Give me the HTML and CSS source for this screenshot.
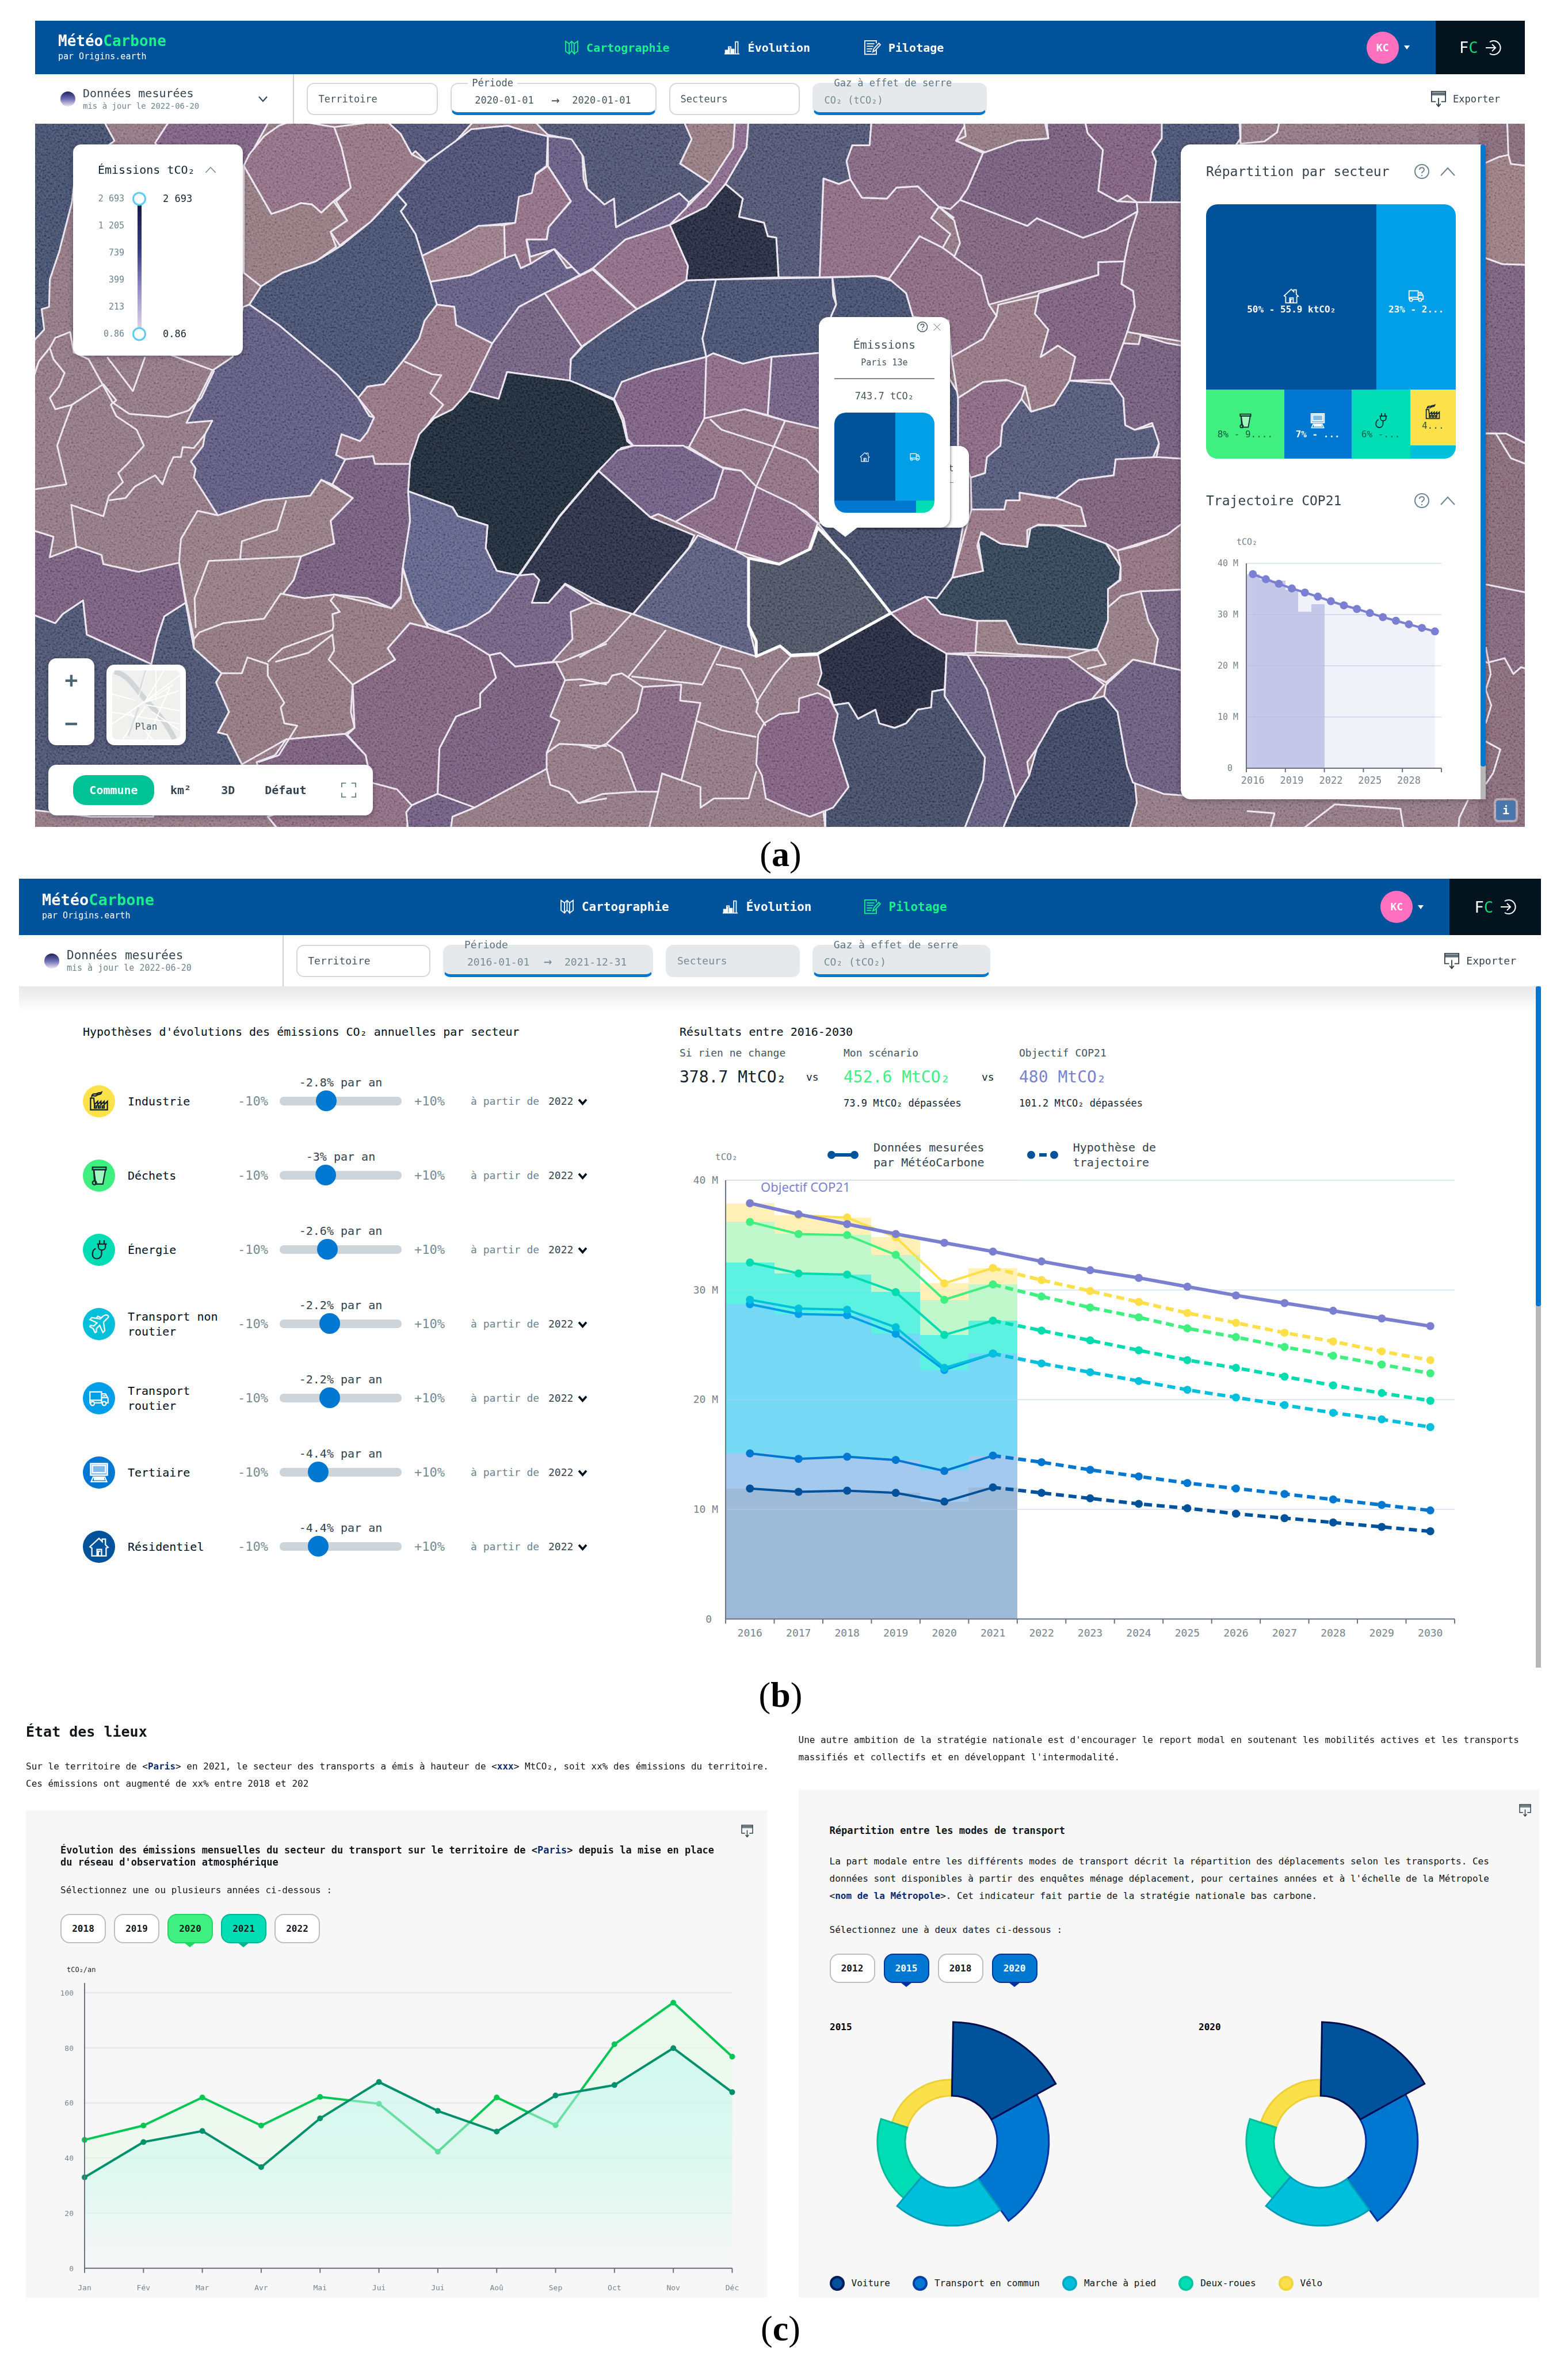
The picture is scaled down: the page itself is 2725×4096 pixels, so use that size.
FILE: index.html
```
<!DOCTYPE html>
<html lang="fr">
<head>
    <meta charset="UTF-8">
    <title>MétéoCarbone</title>
    <link rel="stylesheet" href="styles.css">
</head>
<body>

<svg class="sprite" aria-hidden="true">
    <symbol id="i-map" viewBox="0 0 28 32"><path d="M2 3l7 5v20l-7-5zM9 8l5-5 5 5M14 3v19l-5 6M14 22l5 6V8l7-5v20l-7 5"/></symbol>
    <symbol id="i-bars" viewBox="0 0 32 32"><path d="M1 28h30M3 28v-7h4v7M9 28V14h5v14M16 28v-9h4v9M23 28V4h5v24M5 22v6M11 16v12M18 20v8"/></symbol>
    <symbol id="i-edit" viewBox="0 0 34 32"><path d="M25 20v9H2V2h23v5M6 8h15M6 13h13M6 18h11M6 23h9M18 24l2-6L30 7l3 3-11 12z"/></symbol>
    <symbol id="i-export" viewBox="0 0 28 30"><path d="M9 20H1V1h26v19h-8M1 7h26M1 4h26M14 13v15M10 24l4 5 4-5"/></symbol>
    <symbol id="i-login" viewBox="0 0 28 28"><path d="M8 4a12 12 0 1 1 0 20M1 14h16M12 8l6 6-6 6"/></symbol>
    <symbol id="i-help" viewBox="0 0 28 28"><circle cx="14" cy="14" r="12"/><path d="M10 11c0-5 8-5 8 0 0 3-4 3-4 6M14 20v2"/></symbol>
    <symbol id="i-up" viewBox="0 0 28 18"><path d="M2 16L14 3l12 13"/></symbol>
    <symbol id="i-close" viewBox="0 0 18 18"><path d="M2 2l14 14M16 2L2 16"/></symbol>
    <symbol id="i-factory" viewBox="0 0 32 32"><path d="M3 29V11h5l1 10 5-5v5l5-5v5l5-5v5l5-5v13zM9 23h3v3H9zM15 23h3v3h-3zM21 23h3v3h-3zM5 8c1-6 5-2 8-4s6-1 7-2c-1 5-6 2-8 5-2 2-5-1-7 1z"/></symbol>
    <symbol id="i-bin" viewBox="0 0 32 32"><path d="M6 3h21v4H6z"/><path d="M8 7h18l-4 22H11z" fill="rgba(255,255,255,.5)"/><path d="M8 7l1 17"/><circle cx="9" cy="27" r="3"/></symbol>
    <symbol id="i-plug" viewBox="0 0 32 32"><path d="M17 1v6M24 1v6M13 7h15M15 7v4c0 7 11 7 11 0V7M20 16v6c0 10-14 10-14 1 0-5 2-8 5-9"/></symbol>
    <symbol id="i-plane" viewBox="0 0 32 32"><path d="M30 3c-2-2-6-1-8 1l-4 4L5 6 2 9l11 5-5 5-5-1-1 2 5 3 3 6 2-1v-5l5-5 5 11 3-3-2-13 4-4c2-2 5-4 3-6zM12 7l2-3 5 2"/></symbol>
    <symbol id="i-truck" viewBox="0 0 32 32"><path d="M3 23H2V6h18v17M20 9h6l4 7v7h-3M9 23h12M20 15h9M22 12h4M2 19h18"/><circle cx="6" cy="24" r="3"/><circle cx="24" cy="24" r="3"/></symbol>
    <symbol id="i-screen" viewBox="0 0 32 32"><path d="M3 2h26v18H3zM6 5h20v11H6z" fill="rgba(255,255,255,.5)"/><path d="M7 23h18l3 7H4zM8 25h16M8 27h17"/></symbol>
    <symbol id="i-house" viewBox="0 0 32 32"><path d="M2 16L16 3l5 5V4h5v9l4 4-3 1v12H5V18zM13 30V20h7v10M15 30v-7h3"/></symbol>
    <symbol id="i-full" viewBox="0 0 30 30"><path d="M2 10V2h8M20 2h8v8M28 20v8h-8M10 28H2v-8"/></symbol>
    <symbol id="i-down" viewBox="0 0 18 14"><path d="M2 3l7 8 7-8"/></symbol>
</svg>

<section class="app app--map">
    <header class="topbar">
        <div class="logo"><strong>Météo<em>Carbone</em></strong><span>par Origins.earth</span></div>
        <nav class="nav">
            <a href="#carte" class="active"><svg class="icon"><use href="#i-map"/></svg>Cartographie</a>
            <a href="#evolution"><svg class="icon"><use href="#i-bars"/></svg>Évolution</a>
            <a href="#pilotage"><svg class="icon"><use href="#i-edit"/></svg>Pilotage</a>
        </nav>
        <button class="account"><span>KC</span><i></i></button>
        <a class="fc" href="#fc">F<b>C</b><svg class="icon"><use href="#i-login"/></svg></a>
    </header>
    <div class="filters">
        <div class="source">
            <span class="dot"></span>
            <p>Données mesurées<small>mis à jour le 2022-06-20</small></p>
            <button class="source-open" aria-label="Choisir les données"><svg class="icon"><use href="#i-down"/></svg></button>
        </div>
        <div class="field field--s"><input type="text" value="Territoire" aria-label="Territoire"></div>
        <div class="field field--m on">
            <label for="a-from">Période</label>
            <input id="a-from" type="text" value="2020-01-01"><span class="arrow">→</span><input type="text" value="2020-01-01" aria-label="Fin de période">
        </div>
        <div class="field field--s"><input type="text" value="Secteurs" aria-label="Secteurs"></div>
        <div class="field field--l on off"><label for="a-gaz">Gaz à effet de serre</label><input id="a-gaz" type="text" value="CO₂ (tCO₂)" disabled></div>
        <button class="export"><svg class="icon"><use href="#i-export"/></svg>Exporter</button>
    </div>

    <div class="map" id="carte">
        <svg class="map-canvas" viewBox="0 0 2589 1222" preserveAspectRatio="xMidYMid slice">
            <defs>
                <filter id="grain" x="0" y="0" width="100%" height="100%">
                    <feTurbulence type="fractalNoise" baseFrequency=".3" numOctaves="4" seed="7"/>
                    <feColorMatrix values="2 0 0 0 -.42  2 0 0 0 -.42  2 0 0 0 -.42  0 0 0 0 1"/>
                </filter>
            </defs>
            <rect width="2589" height="1222" fill="#8a707b"/>

            <!-- ouest -->
            <g transform="matrix(.642 0 0 .791 -13 -6)">
                <polygon fill="#3d4866" points="10,0 205,0 235,45 130,110 120,180 85,290 60,350 58,410 38,415 45,460 10,490"/>
                <polygon fill="#76587a" points="385,0 655,0 590,95 585,110 400,100 345,50"/>
                <polygon fill="#8a677d" points="720,0 830,15 850,60 875,148 828,178 795,203 770,185 740,182 700,195 660,206 585,100 600,75 640,35 680,12"/>
                <polygon fill="#8d6d7a" points="830,15 970,0 1010,30 1040,75 1080,92 1000,160 930,222 845,275 820,245 865,220 835,178 875,148 850,60"/>
                <polygon fill="#8d727a" points="585,100 660,206 700,195 740,182 770,185 795,203 828,178 865,220 820,245 835,278 780,310 690,335 632,365 585,335"/>
                <polygon fill="#474a6b" points="970,0 1210,0 1160,45 1080,92 1050,68 1040,75 1010,30"/>
                <polygon fill="#44476b" points="1200,20 1260,15 1300,12 1340,22 1408,35 1405,100 1375,118 1380,135 1365,160 1335,170 1320,225 1230,232 1150,265 1068,298 1050,250 1010,200 1025,185 1000,162 1080,92 1160,45"/>
                <polygon fill="#8a677d" points="1408,100 1470,178 1410,235 1405,262 1350,262 1362,315 1335,325 1320,295 1292,303 1290,230 1320,225 1330,168 1365,160 1375,120"/>
                <polygon fill="#927580" points="1068,298 1150,265 1220,232 1290,230 1292,303 1200,340 1090,355"/>
                <polygon fill="#5b557c" points="1090,355 1200,340 1292,303 1320,295 1335,325 1362,315 1425,283 1460,325 1475,322 1495,340 1400,380 1330,410 1258,490 1215,480 1160,450 1155,410 1108,405"/>
                <polygon fill="#3f4867" points="600,405 632,365 690,335 780,310 850,275 930,222 1000,162 1025,185 1010,200 1050,250 1068,298 1090,355 1108,405 1075,440 1060,480 1015,530 965,580 920,585 895,610 840,560 760,505 680,450"/>
                <polygon fill="#565377" points="600,405 680,450 760,505 840,560 895,610 925,650 938,653 920,685 900,705 850,690 835,735 860,745 850,780 825,800 795,790 765,825 640,835 515,868 450,785 455,765 442,750 475,715 480,690 500,660 430,665 500,550 555,520 583,410"/>
                <polygon fill="#8d6c7b" points="1108,405 1155,410 1160,450 1258,490 1195,595 1150,640 1090,660 1060,700 1035,755 940,755 935,738 860,745 835,735 850,690 900,705 920,685 938,653 895,610 920,585 965,580 1020,525 1060,480 1075,440"/>
                <polygon fill="#6b5879" points="1400,380 1500,497 1470,525 1468,572 1298,553 1275,612 1195,595 1258,490 1330,410"/>
                <polygon fill="#85657f" points="1400,380 1529,328 1649,415 1500,497"/>
                <polygon fill="#1b2532" points="1298,553 1470,572 1493,580 1587,615 1610,660 1623,705 1638,715 1607,720 1545,770 1440,870 1330,1000 1270,990 1240,940 1245,890 1165,870 1150,850 1030,815 1035,750 1060,690 1100,655 1150,635 1195,595 1275,612"/>
                <polygon fill="#252a3f" points="1545,770 1685,872 1805,912 1789,940 1639,1085 1568,1067 1455,1018 1410,1060 1365,1060 1370,1020 1385,1010 1370,997 1330,1000 1440,870"/>
                <polygon fill="#5a5b82" points="1030,815 1150,850 1165,870 1245,890 1240,940 1270,990 1330,1000 1250,1080 1190,1110 1130,1125 1080,1105 1045,1060 1015,980 1035,880"/>
                <polygon fill="#6c5474" points="860,745 935,738 940,755 1035,755 1030,815 1035,880 1015,985 1015,1040 985,1072 920,1050 830,1042 750,1050 685,1040 720,1010 740,958 830,930 820,880 880,830 825,800"/>
                <polygon fill="#8d747c" points="460,858 515,868 640,835 700,830 765,825 795,790 880,830 820,880 830,930 740,958 720,1010 640,1095 530,1105 450,1140 425,1040 410,970 415,920"/>
                <polygon fill="#8a6f78" points="450,1140 465,1125 530,1105 640,1095 685,1040 750,1050 830,1042 985,1072 1010,1050 1015,985 1045,1060 1085,1115 1035,1105 975,1160 995,1185 880,1240 875,1300 885,1335 860,1348 700,1360 580,1415 550,1380 540,1350 515,1345 545,1300 510,1235 525,1215 450,1160"/>
                <polygon fill="#785a76" points="1085,1115 1170,1135 1230,1165 1250,1175 1268,1225 1225,1260 1225,1290 1160,1310 1115,1380 1110,1480 1040,1505 930,1455 915,1395 865,1350 885,1335 880,1240 995,1185 975,1160 1035,1105"/>
                <polygon fill="#6f5674" points="1250,1175 1280,1170 1320,1200 1430,1190 1455,1230 1415,1310 1440,1320 1405,1390 1405,1425 1210,1510 1150,1530 1110,1560 1040,1505 1110,1480 1115,1380 1160,1310 1225,1290 1225,1260 1268,1225"/>
                <polygon fill="#6a587a" points="1130,1125 1190,1110 1250,1080 1330,1000 1370,997 1385,1010 1365,1060 1410,1060 1455,1020 1530,1060 1470,1080 1475,1140 1420,1190 1320,1200 1280,1170 1250,1175 1170,1135"/>
                <polygon fill="#705676" points="10,900 70,915 60,960 135,937 200,955 205,975 300,992 410,972 428,1060 370,1090 350,1140 335,1195 160,1130 150,1055 95,1085 75,1105 10,1085"/>
                <polygon fill="#434b69" points="10,1085 75,1105 95,1085 150,1055 160,1130 335,1195 350,1140 370,1090 428,1060 450,1160 525,1215 510,1235 545,1300 515,1345 540,1350 580,1415 600,1450 350,1440 340,1530 170,1530 120,1525 10,1515"/>
                <polygon fill="#715674" points="700,1360 860,1348 915,1395 930,1455 650,1500 620,1410 670,1395"/>
                <polygon fill="#856479" points="930,1455 1000,1470 1040,1505 1025,1560 680,1560 650,1530"/>
                <polygon fill="#675578" points="1040,1505 1110,1480 1210,1510 1150,1530 1145,1560 1030,1560 1025,1520"/>
                <g class="lines">
                    <polyline points="10,580 30,530 60,500 70,525 100,555 85,585 60,610 75,635 120,625 95,680 80,715 105,800 10,812"/>
                    <polyline points="60,500 75,478 115,465 125,510 165,525 230,620 275,645 380,652 435,638 470,610 505,550"/>
                    <polyline points="120,625 205,580 240,615 225,625 240,650 295,680 315,715 270,755 245,775 258,795 220,825 205,870 118,845 132,940"/>
                    <polyline points="220,835 265,830 290,805 345,780 365,800 380,765 395,740 415,740 420,718 450,720 480,690"/>
                    <polyline points="455,1115 452,1050 490,968 740,958"/>
                    <polyline points="575,965 580,925 675,900 700,835"/>
                    <polyline points="650,1190 690,1160 825,1120 828,1112 825,1085 845,1080 820,1055 830,1045"/>
                    <polyline points="670,1190 760,1170 825,1130 830,1165 815,1185 880,1240"/>
                    <polyline points="525,1215 580,1215 595,1180 650,1195 650,1220 695,1280 685,1290 695,1325 730,1330 680,1395 625,1410"/>
                    <polyline points="215,520 285,595 318,520"/>
                    <polyline points="385,515 505,550"/>
                    <polyline points="1020,530 1095,558 1120,560 1090,600 1125,625 1090,660"/>
                    <polyline points="1530,1060 1568,1067"/>
                    <polyline points="1405,1390 1440,1370 1568,1375"/>
                    <polyline points="1405,1425 1415,1460 1465,1475 1490,1500 1568,1490"/>
                    <polyline points="1420,1190 1445,1190 1568,1150"/>
                    <polyline points="1455,1230 1500,1228 1568,1240"/>
                    <polyline class="thick" points="1545,770 1440,870 1330,1000"/>
                </g>
            </g>

            <!-- centre et est -->
            <g transform="matrix(.668 0 0 .791 946 -6)">
                <polygon fill="#5f547a" points="-82,35 -22,40 7,70 11,130 20,150 65,185 90,172 95,235 260,160 285,180 275,200 235,230 120,262 35,325 2,340 -65,283 -128,300 -137,262 -85,262 -80,235 -22,178 -82,100"/>
                <polygon fill="#464b69" points="-120,0 275,0 292,42 262,95 340,138 285,180 260,160 95,235 90,172 65,185 20,150 10,80 -20,42 -82,32"/>
                <polygon fill="#8e737b" points="270,0 405,0 400,60 340,138 262,95 292,42"/>
                <polygon fill="#826384" points="405,0 440,0 435,60 380,140 330,190 235,230 340,138 400,60"/>
                <polygon fill="#484d6b" points="440,0 760,0 755,55 710,55 695,90 705,130 675,140 635,128 625,345 518,345 512,258 490,255 480,225 415,212 425,172 380,140 435,60"/>
                <polygon fill="#212538" points="235,230 330,190 380,140 425,172 415,212 480,225 490,255 512,258 518,345 278,352 282,320"/>
                <polygon fill="#86657f" points="35,325 120,262 235,230 282,320 278,352 150,415"/>
                <polygon fill="#3f4867" points="9,497 60,465 150,415 215,385 278,352 355,350 320,480 330,520 190,550 110,575 90,612 0,580 -25,572 -22,525"/>
                <polygon fill="#3f4867" points="355,350 658,345 660,385 668,405 655,430 640,510 500,520 425,535 348,512 330,520 320,480"/>
                <polygon fill="#3d4766" points="658,345 770,342 820,355 850,380 868,432 985,600 985,780 620,800 640,510 655,430 668,405"/>
                <polygon fill="#75577a" points="110,575 190,550 330,520 330,650 285,718 140,715 125,700 115,655 90,612"/>
                <polygon fill="#83637e" points="330,520 348,512 425,535 500,520 490,648 430,635 325,655"/>
                <polygon fill="#6a587c" points="500,520 640,510 640,690 535,660 490,648"/>
                <polygon fill="#886a7c" points="285,718 325,655 430,635 535,660 640,680 640,900 590,860 460,805 420,770 370,762"/>
                <polygon fill="#68567b" points="50,770 100,725 140,715 270,715 375,765 350,830 250,882 205,865 185,872"/>
                <polygon fill="#80607d" points="375,765 420,770 460,805 560,845 620,885 595,945 520,975 405,945 250,882 350,830"/>
                <polygon fill="#535576" points="308,912 405,945 440,962 440,1110 460,1178 370,1155 140,1085 285,940"/>
                <polygon fill="#3b425f" points="620,885 1000,880 990,930 970,1005 930,1050 900,1047 810,1083"/>
                <polygon fill="#2c3b4e" points="970,1005 1050,990 1035,910 1060,910 1095,930 1165,937 1175,890 1240,890 1320,910 1370,930 1408,980 1405,1010 1375,1030 1375,1100 1345,1165 1250,1160 1140,1150 1110,1100 1035,1100 940,1085 900,1047 930,1050"/>
                <polygon fill="#8d6d7a" points="1020,855 1105,855 1110,835 1145,835 1145,818 1225,830 1245,820 1305,850 1318,892 1240,890 1195,888 1165,900 1165,937 1095,930 1045,905 1035,935 1050,990 970,1005 995,930"/>
                <polygon fill="#4b5070" points="1018,785 1055,775 1060,740 1095,715 1100,670 1150,612 1175,640 1235,625 1275,572 1395,580 1415,610 1420,670 1445,680 1500,670 1508,710 1490,745 1395,745 1390,780 1300,790 1240,830 1145,818 1145,835 1110,835 1105,855 1020,855"/>
                <polygon fill="#81607a" points="985,610 1050,575 1140,570 1160,585 1150,612 1100,670 1095,715 1060,740 1055,775 1018,785 985,720"/>
                <polygon fill="#8c6f7a" points="968,520 1050,480 1085,430 1090,405 1195,385 1185,425 1220,460 1200,520 1245,495 1290,520 1275,572 1235,625 1175,640 1160,585 1110,570 1050,575 985,610"/>
                <polygon fill="#85647c" points="635,128 675,140 705,130 735,170 800,172 825,148 880,145 935,190 915,215 965,250 945,280 885,255 805,348 770,342 625,345"/>
                <polygon fill="#826279" points="805,348 885,255 945,280 1045,342 1065,405 1085,430 1070,450 1050,480 968,520 960,440 868,432 850,380"/>
                <polygon fill="#785c75" points="935,190 990,175 1165,232 1190,215 1310,258 1370,240 1452,200 1430,260 1418,310 1350,312 1350,340 1065,405 1045,342 975,300 990,270 975,220"/>
                <polygon fill="#7c5e79" points="710,55 755,55 760,0 1010,0 980,45 1050,72 1010,150 990,175 965,195 935,190 880,145 825,148 800,172 735,170 705,130 695,90"/>
                <polygon fill="#8b717a" points="1000,0 1210,0 1220,40 1140,45 1060,72 980,45 1005,35"/>
                <polygon fill="#6f5674" points="1050,72 1140,45 1220,40 1215,0 1315,0 1322,28 1362,65 1350,155 1400,178 1450,180 1452,200 1370,240 1310,258 1190,215 1165,232 990,175 1010,150"/>
                <polygon fill="#775877" points="1315,0 1520,0 1515,40 1490,70 1500,90 1485,180 1450,180 1425,165 1400,178 1350,155 1362,65 1322,28"/>
                <polygon fill="#414a69" points="1515,0 1720,0 1720,40 1600,185 1545,182 1485,180 1500,90 1490,70 1515,40"/>
                <polygon fill="#7b5e75" points="1485,180 1600,180 1600,490 1560,485 1425,465 1445,410 1440,375 1410,360 1418,310 1430,260 1452,200 1450,180"/>
                <polygon fill="#735875" points="1195,380 1350,340 1350,312 1418,310 1410,360 1440,375 1445,410 1425,465 1415,490 1380,570 1275,572 1290,520 1245,495 1200,520 1220,460 1185,425"/>
                <polygon fill="#6b5575" points="1415,490 1455,492 1460,472 1530,490 1600,500 1600,745 1500,745 1508,710 1490,665 1445,680 1420,670 1415,610 1380,570"/>
                <polygon fill="#755874" points="1395,745 1500,740 1600,745 1600,870 1530,910 1400,945 1370,930 1240,890 1318,892 1305,850 1240,830 1300,790 1390,780"/>
                <polygon fill="#886b78" points="1400,945 1450,935 1530,910 1600,865 1600,1030 1460,1035 1410,1045 1375,1070 1375,1030 1408,1010 1408,980"/>
                <polygon fill="#695876" points="1460,1035 1600,1030 1600,1215 1495,1195 1505,1140 1480,1100"/>
                <polygon fill="#8d737b" points="1410,1045 1460,1035 1480,1100 1505,1140 1495,1195 1440,1185 1370,1235 1300,1205 1270,1180 1030,1168 1035,1100 1110,1100 1140,1150 1345,1165 1375,1100 1375,1070"/>
                <polygon fill="#85657d" points="810,1083 900,1047 940,1085 1035,1100 1030,1170 955,1172 870,1130"/>
                <polygon fill="#212438" points="620,1172 810,1083 870,1130 955,1172 950,1250 918,1255 915,1290 880,1295 850,1325 820,1335 780,1325 770,1295 725,1315 700,1280 660,1285 650,1255 620,1240 630,1215"/>
                <polygon fill="#5a5375" points="955,1172 1010,1175 1060,1250 1135,1490 1100,1560 1000,1560 1050,1450 1055,1400 950,1265"/>
                <polygon fill="#6e5675" points="1010,1175 1270,1180 1365,1240 1330,1275 1295,1280 1245,1300 1190,1380 1165,1410 1170,1440 1135,1490 1060,1250"/>
                <polygon fill="#3b435e" points="660,1285 700,1280 725,1315 770,1295 780,1325 820,1335 850,1325 880,1295 915,1290 918,1255 950,1250 950,1265 1055,1400 1050,1450 1000,1560 640,1560 640,1510 700,1465 660,1360 672,1305"/>
                <polygon fill="#353d59" points="1365,1265 1400,1300 1425,1420 1445,1455 1450,1500 1430,1560 1100,1560 1135,1490 1170,1440 1190,1380 1245,1300 1295,1280"/>
                <polygon fill="#625475" points="1370,1240 1440,1185 1495,1195 1600,1215 1600,1485 1520,1480 1440,1455 1425,1420 1400,1300 1365,1265"/>
                <polygon fill="#785877" points="480,1325 520,1305 570,1300 572,1270 620,1258 650,1270 672,1305 660,1360 700,1465 660,1510 600,1530 550,1515 485,1490 475,1440 460,1415 465,1350"/>
                <polygon fill="#7d5f79" points="165,1245 265,1240 262,1275 315,1280 265,1450 215,1435 205,1475 148,1475 110,1390 70,1370 150,1300"/>
                <g class="lines">
                    <polyline points="0,1180 70,1145 135,1085"/>
                    <polyline points="125,1225 225,1120"/>
                    <polyline points="0,1242 75,1235 85,1220 110,1215 165,1245"/>
                    <polyline points="135,1222 320,1240 370,1155"/>
                    <polyline points="355,1195 420,1205 450,1250 465,1280 460,1300 485,1330"/>
                    <polyline points="460,1280 510,1215 550,1178 620,1175"/>
                    <polyline points="460,1178 522,1155 550,1178"/>
                    <polyline points="70,1370 40,1380 0,1372"/>
                    <polyline points="148,1475 60,1480 0,1500"/>
                    <polyline points="305,1320 370,1340 460,1355"/>
                    <polyline points="215,1435 315,1465 315,1510 350,1490 440,1490 460,1430"/>
                    <polyline points="180,1560 205,1475"/>
                    <polyline points="340,657 370,680 510,718 590,745 640,790"/>
                    <polyline points="535,660 460,805 405,945"/>
                    <polyline points="1270,1180 1345,1160 1370,1195 1320,1205"/>
                    <polyline points="635,1520 640,1560"/>
                    <polyline points="915,215 935,190 975,215"/>
                </g>
                <polygon class="selected" fill="#454b5b" points="440,962 520,975 600,942 620,895 700,965 810,1083 720,1125 620,1172 550,1175 522,1155 460,1178 460,1145 440,1110"/>
            </g>

            <!-- bord droit, derrière le panneau -->
            <g transform="matrix(.437 0 0 .781 1953 19)">
                <rect x="1270" y="-30" width="200" height="1600" fill="#7f6271"/>
                <polygon fill="#92757a" points="1250,75 1350,50 1390,45 1400,65 1470,70 1470,290 1365,288 1250,265"/>
                <polygon fill="#725874" points="1250,265 1365,288 1470,290 1470,690 1380,665 1250,665"/>
                <polygon fill="#7b5e75" points="1250,995 1470,1020 1470,1190 1440,1185 1410,1200 1375,1165 1305,1175 1250,1150"/>
                <g class="lines">
                    <polyline points="320,-30 325,20 420,15 470,-5 480,-30"/>
                    <polyline points="1385,-30 1390,45"/>
                    <polyline points="1300,665 1340,665 1400,720 1470,735"/>
                    <polyline points="1300,1350 1358,1368 1330,1420 1300,1445"/>
                    <polyline points="1300,1140 1320,1200 1300,1235 1322,1270 1300,1310"/>
                    <polyline points="350,1505 460,1510 440,1550"/>
                    <polyline points="560,1550 700,1490 960,1500 975,1550"/>
                    <polyline points="1190,1550 1195,1520 1230,1480"/>
                </g>
            </g>
            <rect class="grain" width="2589" height="1222" filter="url(#grain)"/>
        </svg>

        <div class="panel scale">
            <button class="scale-title">Émissions tCO₂ <svg class="icon"><use href="#i-up"/></svg></button>
            <div class="scale-body">
                <ul><li>2 693</li><li>1 205</li><li>739</li><li>399</li><li>213</li><li>0.86</li></ul>
                <div class="scale-range">
                    <input type="range" min="0" max="100" value="100" aria-label="Maximum">
                    <input type="range" min="0" max="100" value="0" aria-label="Minimum">
                </div>
                <p><output>2 693</output><output>0.86</output></p>
            </div>
        </div>

        <div class="panel zoom"><button aria-label="Zoomer">+</button><button aria-label="Dézoomer">−</button></div>
        <button class="panel plan">
            <svg viewBox="0 0 118 116" preserveAspectRatio="none">
                <rect width="118" height="116" rx="8" fill="#f0f1ee"/>
                <path d="M4 2c25 6 34 26 52 45s38 40 52 68" stroke="#d0d6d8" stroke-width="9" fill="none"/>
                <path d="M0 90L60 50 118 8M60 0l-14 44M56 54l60-20M60 58l58 10M70 70l46 30M0 40l40 10M90 0L56 54l50-30M18 116l40-56M30 70l40 46M76 0v50M100 30L60 116M0 70l118 20" stroke="#fff" stroke-width="2" fill="none"/>
                <path d="M58 0L46 40M46 62L28 110" stroke="#d9dee0" stroke-width="3" fill="none"/>
            </svg>
            <span>Plan</span>
        </button>
        <div class="panel modes">
            <button class="active">Commune</button><button>km²</button><button>3D</button><button>Défaut</button>
            <button class="full" aria-label="Plein écran"><svg class="icon"><use href="#i-full"/></svg></button>
        </div>

        <div class="popup popup--back"><span>t</span></div>
        <div class="popup">
            <div class="popup-tools"><button aria-label="Aide"><svg class="icon"><use href="#i-help"/></svg></button><button aria-label="Fermer"><svg class="icon"><use href="#i-close"/></svg></button></div>
            <h3>Émissions</h3>
            <h4>Paris 13e</h4>
            <p>743.7 tCO₂</p>
            <div class="tree tree--mini">
                <div class="c-res"><svg class="icon"><use href="#i-house"/></svg></div>
                <div class="c-road"><svg class="icon"><use href="#i-truck"/></svg></div>
                <div class="c-ter"></div>
                <div class="c-ener"></div>
            </div>
        </div>

        <aside class="panel side">
            <div class="side-head"><h2>Répartition par secteur</h2><button aria-label="Aide"><svg class="icon"><use href="#i-help"/></svg></button><button aria-label="Replier"><svg class="icon"><use href="#i-up"/></svg></button></div>
            <div class="tree tree--main">
                <div class="tree-row">
                    <div class="c-res"><svg class="icon"><use href="#i-house"/></svg>50% - 55.9 ktCO₂</div>
                    <div class="c-road"><svg class="icon"><use href="#i-truck"/></svg>23% - 2...</div>
                </div>
                <div class="tree-row">
                    <div class="c-waste"><svg class="icon"><use href="#i-bin"/></svg>8% - 9....</div>
                    <div class="c-ter"><svg class="icon"><use href="#i-screen"/></svg>7% - ...</div>
                    <div class="c-ener"><svg class="icon"><use href="#i-plug"/></svg>6% -...</div>
                    <div class="tree-last"><div class="c-ind"><svg class="icon"><use href="#i-factory"/></svg>4...</div><div class="c-air"></div></div>
                </div>
            </div>
            <div class="side-head"><h2>Trajectoire COP21</h2><button aria-label="Aide"><svg class="icon"><use href="#i-help"/></svg></button><button aria-label="Replier"><svg class="icon"><use href="#i-up"/></svg></button></div>
            <svg id="cop21" class="chart" viewBox="0 0 434 490"></svg>
            <div class="scrollbar"><i></i></div>
        </aside>
        <button class="info">i</button>
    </div>
</section>
<p class="caption">(<b>a</b>)</p>

<section class="app app--pilot">
    <header class="topbar">
        <div class="logo"><strong>Météo<em>Carbone</em></strong><span>par Origins.earth</span></div>
        <nav class="nav">
            <a href="#carte"><svg class="icon"><use href="#i-map"/></svg>Cartographie</a>
            <a href="#evolution"><svg class="icon"><use href="#i-bars"/></svg>Évolution</a>
            <a href="#pilotage" class="active"><svg class="icon"><use href="#i-edit"/></svg>Pilotage</a>
        </nav>
        <button class="account"><span>KC</span><i></i></button>
        <a class="fc" href="#fc">F<b>C</b><svg class="icon"><use href="#i-login"/></svg></a>
    </header>
    <div class="filters">
        <div class="source">
            <span class="dot"></span>
            <p>Données mesurées<small>mis à jour le 2022-06-20</small></p>
        </div>
        <div class="field field--s"><input type="text" value="Territoire" aria-label="Territoire"></div>
        <div class="field field--m on off">
            <label for="b-from">Période</label>
            <input id="b-from" type="text" value="2016-01-01" disabled><span class="arrow">→</span><input type="text" value="2021-12-31" aria-label="Fin de période" disabled>
        </div>
        <div class="field field--s off"><input type="text" value="Secteurs" aria-label="Secteurs" disabled></div>
        <div class="field field--l on off"><label for="b-gaz">Gaz à effet de serre</label><input id="b-gaz" type="text" value="CO₂ (tCO₂)" disabled></div>
        <button class="export"><svg class="icon"><use href="#i-export"/></svg>Exporter</button>
    </div>

    <div class="pilot" id="pilotage">
        <div class="hypotheses">
            <h2>Hypothèses d'évolutions des émissions CO₂ annuelles par secteur</h2>
            <div class="row">
                <span class="badge c-ind"><svg class="icon"><use href="#i-factory"/></svg></span><label for="r1">Industrie</label>
                <span class="min">-10%</span><div class="rate"><output>-2.8% par an</output><input id="r1" type="range" min="-10" max="10" step="0.1" value="-2.8"></div><span class="max">+10%</span>
                <label class="since" for="y1">à partir de</label><span class="year"><select id="y1"><option>2022</option></select><svg class="icon"><use href="#i-down"/></svg></span>
            </div>
            <div class="row">
                <span class="badge c-waste"><svg class="icon"><use href="#i-bin"/></svg></span><label for="r2">Déchets</label>
                <span class="min">-10%</span><div class="rate"><output>-3% par an</output><input id="r2" type="range" min="-10" max="10" step="0.1" value="-3"></div><span class="max">+10%</span>
                <label class="since" for="y2">à partir de</label><span class="year"><select id="y2"><option>2022</option></select><svg class="icon"><use href="#i-down"/></svg></span>
            </div>
            <div class="row">
                <span class="badge c-ener"><svg class="icon"><use href="#i-plug"/></svg></span><label for="r3">Énergie</label>
                <span class="min">-10%</span><div class="rate"><output>-2.6% par an</output><input id="r3" type="range" min="-10" max="10" step="0.1" value="-2.6"></div><span class="max">+10%</span>
                <label class="since" for="y3">à partir de</label><span class="year"><select id="y3"><option>2022</option></select><svg class="icon"><use href="#i-down"/></svg></span>
            </div>
            <div class="row">
                <span class="badge c-air"><svg class="icon"><use href="#i-plane"/></svg></span><label for="r4">Transport non routier</label>
                <span class="min">-10%</span><div class="rate"><output>-2.2% par an</output><input id="r4" type="range" min="-10" max="10" step="0.1" value="-2.2"></div><span class="max">+10%</span>
                <label class="since" for="y4">à partir de</label><span class="year"><select id="y4"><option>2022</option></select><svg class="icon"><use href="#i-down"/></svg></span>
            </div>
            <div class="row">
                <span class="badge c-road"><svg class="icon"><use href="#i-truck"/></svg></span><label for="r5">Transport routier</label>
                <span class="min">-10%</span><div class="rate"><output>-2.2% par an</output><input id="r5" type="range" min="-10" max="10" step="0.1" value="-2.2"></div><span class="max">+10%</span>
                <label class="since" for="y5">à partir de</label><span class="year"><select id="y5"><option>2022</option></select><svg class="icon"><use href="#i-down"/></svg></span>
            </div>
            <div class="row">
                <span class="badge c-ter"><svg class="icon"><use href="#i-screen"/></svg></span><label for="r6">Tertiaire</label>
                <span class="min">-10%</span><div class="rate"><output>-4.4% par an</output><input id="r6" type="range" min="-10" max="10" step="0.1" value="-4.4"></div><span class="max">+10%</span>
                <label class="since" for="y6">à partir de</label><span class="year"><select id="y6"><option>2022</option></select><svg class="icon"><use href="#i-down"/></svg></span>
            </div>
            <div class="row">
                <span class="badge c-res"><svg class="icon"><use href="#i-house"/></svg></span><label for="r7">Résidentiel</label>
                <span class="min">-10%</span><div class="rate"><output>-4.4% par an</output><input id="r7" type="range" min="-10" max="10" step="0.1" value="-4.4"></div><span class="max">+10%</span>
                <label class="since" for="y7">à partir de</label><span class="year"><select id="y7"><option>2022</option></select><svg class="icon"><use href="#i-down"/></svg></span>
            </div>
        </div>

        <div class="results">
            <h2>Résultats entre 2016-2030</h2>
            <div class="stats">
                <div><span>Si rien ne change</span><strong>378.7 MtCO₂</strong></div>
                <i>vs</i>
                <div class="mine"><span>Mon scénario</span><strong>452.6 MtCO₂</strong><small>73.9 MtCO₂ dépassées</small></div>
                <i>vs</i>
                <div class="goal"><span>Objectif COP21</span><strong>480 MtCO₂</strong><small>101.2 MtCO₂ dépassées</small></div>
            </div>
            <div class="key">
                <span class="unit">tCO₂</span>
                <svg viewBox="0 0 54 14"><path d="M7 7h40"/><circle cx="7" cy="7" r="7"/><circle cx="47" cy="7" r="7"/></svg>
                <p>Données mesurées<br>par MétéoCarbone</p>
                <svg viewBox="0 0 54 14"><path d="M21 7h13"/><circle cx="7" cy="7" r="7"/><circle cx="47" cy="7" r="7"/></svg>
                <p>Hypothèse de<br>trajectoire</p>
            </div>
            <svg id="scenario" class="chart" viewBox="0 0 1350 830"></svg>
        </div>
        <div class="scrollbar"><i></i></div>
    </div>
</section>
<p class="caption">(<b>b</b>)</p>

<section class="report">
    <div class="col col--left">
        <h1>État des lieux</h1>
        <p class="lead">Sur le territoire de &lt;<b>Paris</b>&gt; en 2021, le secteur des transports a émis à hauteur de &lt;<b>xxx</b>&gt; MtCO₂, soit xx% des émissions du territoire.<br>Ces émissions ont augmenté de xx% entre 2018 et 202</p>
        <article class="card">
            <button class="card-export" aria-label="Exporter"><svg class="icon"><use href="#i-export"/></svg></button>
            <h2>Évolution des émissions mensuelles du secteur du transport sur le territoire de &lt;<b>Paris</b>&gt; depuis la mise en place<br>du réseau d'observation atmosphérique</h2>
            <p class="pick">Sélectionnez une ou plusieurs années ci-dessous :</p>
            <div class="chips"><button>2018</button><button>2019</button><button class="on-green">2020</button><button class="on-teal">2021</button><button>2022</button></div>
            <svg id="monthly" class="chart" viewBox="0 0 1168 587"></svg>
        </article>
    </div>
    <div class="col col--right">
        <p class="lead">Une autre ambition de la stratégie nationale est d'encourager le report modal en soutenant les mobilités actives et les transports<br>massifiés et collectifs et en développant l'intermodalité.</p>
        <article class="card">
            <button class="card-export" aria-label="Exporter"><svg class="icon"><use href="#i-export"/></svg></button>
            <h2>Répartition entre les modes de transport</h2>
            <p class="lead">La part modale entre les différents modes de transport décrit la répartition des déplacements selon les transports. Ces<br>données sont disponibles à partir des enquêtes ménage déplacement, pour certaines années et à l'échelle de la Métropole<br>&lt;<b>nom de la Métropole</b>&gt;. Cet indicateur fait partie de la stratégie nationale bas carbone.</p>
            <p class="pick">Sélectionnez une à deux dates ci-dessous :</p>
            <div class="chips"><button>2012</button><button class="on-blue">2015</button><button>2018</button><button class="on-blue">2020</button></div>
            <div class="roses">
                <svg class="rose" viewBox="0 0 592 375" data-year="2015"></svg>
                <svg class="rose" viewBox="0 0 592 375" data-year="2020"></svg>
            </div>
            <ul class="modes-key">
                <li><i class="m-car"></i>Voiture</li><li><i class="m-bus"></i>Transport en commun</li><li><i class="m-walk"></i>Marche à pied</li><li><i class="m-two"></i>Deux-roues</li><li><i class="m-bike"></i>Vélo</li>
            </ul>
        </article>
    </div>
</section>
<p class="caption caption--last">(<b>c</b>)</p>

<script src="charts.js"></script>
</body>
</html>
```
FILE: charts.js
```
var NS = "http://www.w3.org/2000/svg";

function add(parent, name, attrs, text) {
    var el = document.createElementNS(NS, name);
    for (var k in attrs) {
        el.setAttribute(k, attrs[k]);
    }
    if (text !== undefined) {
        el.textContent = text;
    }
    parent.appendChild(el);
    return el;
}

function points(list) {
    return list.map(function (p) { return p[0].toFixed(1) + "," + p[1].toFixed(1); }).join(" ");
}

// objectif COP21, en MtCO2
var goal = [37.9, 36.9, 36, 35.1, 34.3, 33.5, 32.6, 31.8, 31.1, 30.3, 29.5, 28.8, 28.1, 27.4, 26.7];

// cumuls par secteur, du haut vers le bas
var sectors = [
    {color: "#fddf4a", fill: "#fff0b8", v: [37.9, 36.8, 36.6, 34.8, 30.6, 32, 30.9, 29.9, 28.9, 27.9, 27, 26.1, 25.3, 24.4, 23.6]},
    {color: "#3fef7f", fill: "#c0f8cc", v: [36.2, 35.1, 35, 33.2, 29.1, 30.5, 29.4, 28.4, 27.5, 26.5, 25.7, 24.8, 24, 23.2, 22.4]},
    {color: "#00dcb0", fill: "#5cf2e1", v: [32.5, 31.5, 31.4, 29.8, 25.9, 27.2, 26.3, 25.4, 24.5, 23.6, 22.9, 22.1, 21.3, 20.6, 19.9]},
    {color: "#009fe8", fill: "#75d9f5", v: [28.7, 27.8, 27.7, 26, 22.7, 24.2]},
    {color: "#00c0dc", fill: null, v: [29.1, 28.3, 28.2, 26.6, 22.9, 24.2, 23.3, 22.5, 21.7, 20.9, 20.2, 19.5, 18.8, 18.2, 17.5]},
    {color: "#0078d2", fill: "#a3c9ee", v: [15.1, 14.6, 14.8, 14.5, 13.5, 14.9, 14.3, 13.6, 13, 12.4, 11.9, 11.4, 10.9, 10.4, 9.9]},
    {color: "#00529b", fill: "#9dbad9", v: [11.9, 11.6, 11.7, 11.5, 10.7, 12, 11.5, 11, 10.5, 10.1, 9.6, 9.2, 8.8, 8.4, 8]}
];

function drawCop21() {
    var svg = document.getElementById("cop21");
    var x0 = 70, x1 = 409, y0 = 450, y1 = 94, step = (x1 - x0) / 15;
    var y = function (v) { return y0 - v * (y0 - y1) / 40; };
    var line = goal.map(function (v, i) { return [x0 + step * (i + 0.5), y(v)]; });
    var i;
    for (i = 0; i <= 4; i++) {
        add(svg, "line", {x1: x0, x2: x1, y1: y(i * 10), y2: y(i * 10), "class": "grid"});
        add(svg, "text", {x: i ? 56 : 46, y: y(i * 10) + 5, "class": "t15 end"}, i ? i * 10 + " M" : "0");
    }
    add(svg, "text", {x: 53, y: 62, "class": "t15"}, "tCO₂");
    add(svg, "polygon", {points: points([[x0 + step / 2, y0]].concat(line, [[x1 - step / 2, y0]])), fill: "#7b7fd1", opacity: 0.11});
    for (i = 0; i < 6; i++) {
        add(svg, "rect", {x: x0 + i * step, y: y(sectors[0].v[i]), width: step, height: y0 - y(sectors[0].v[i]), fill: "#b5b8e2", opacity: 0.75, "shape-rendering": "crispEdges"});
    }
    add(svg, "polyline", {points: points(line), fill: "none", stroke: "#7b7fd1", "stroke-width": 4});
    line.forEach(function (p) { add(svg, "circle", {cx: p[0], cy: p[1], r: 7, fill: "#7b7fd1"}); });
    add(svg, "path", {d: "M" + x0 + " " + y1 + "V" + y0 + "H" + x1, "class": "axis"});
    for (i = 0; i <= 5; i++) {
        add(svg, "line", {x1: x0 + i * step * 3, x2: x0 + i * step * 3, y1: y0, y2: y0 + 7, "class": "axis"});
        if (i < 5) {
            add(svg, "text", {x: x0 + step * (i * 3 + 0.5), y: 477, "class": "t17 mid"}, 2016 + i * 3);
        }
    }
}

function drawScenario() {
    var svg = document.getElementById("scenario");
    var x0 = 80, x1 = 1346, y0 = 780, y1 = 18, step = (x1 - x0) / 15;
    var y = function (v) { return y0 - v * (y0 - y1) / 40; };
    var x = function (i) { return x0 + step * (i + 0.5); };
    var i;
    sectors.forEach(function (s) {
        if (!s.fill) { return; }
        for (var j = 0; j < 6; j++) {
            add(svg, "rect", {x: x0 + j * step, y: y(s.v[j]), width: step, height: y0 - y(s.v[j]), fill: s.fill, "shape-rendering": "crispEdges"});
        }
    });
    for (i = 0; i <= 4; i++) {
        add(svg, "line", {x1: i < 4 ? x0 + step * 6 : x0, x2: x1, y1: y(i * 10), y2: y(i * 10), "class": "grid"});
        add(svg, "line", {x1: x0, x2: x0 + step * 6, y1: y(i * 10), y2: y(i * 10), "class": "grid grid--soft"});
        add(svg, "text", {x: i ? 67 : 56, y: y(i * 10) + 6, "class": "t18 end"}, i ? i * 10 + " M" : "0");
    }
    sectors.forEach(function (s) {
        var pts = s.v.map(function (v, j) { return [x(j), y(v)]; });
        add(svg, "polyline", {points: points(pts.slice(0, 6)), fill: "none", stroke: s.color, "stroke-width": 4});
        add(svg, "polyline", {points: points(pts.slice(5)), fill: "none", stroke: s.color, "stroke-width": 6, "stroke-dasharray": "14 8"});
        pts.forEach(function (p) { add(svg, "circle", {cx: p[0], cy: p[1], r: 7, fill: s.color}); });
    });
    var line = goal.map(function (v, j) { return [x(j), y(v)]; });
    add(svg, "polyline", {points: points(line), fill: "none", stroke: "#7b7fd1", "stroke-width": 6});
    line.forEach(function (p) { add(svg, "circle", {cx: p[0], cy: p[1], r: 7, fill: "#7b7fd1"}); });
    add(svg, "text", {x: 141, y: 38, "class": "goal-label"}, "Objectif COP21");
    add(svg, "path", {d: "M" + x0 + " " + y1 + "V" + y0 + "H" + x1, "class": "axis"});
    for (i = 0; i <= 15; i++) {
        add(svg, "line", {x1: x0 + i * step, x2: x0 + i * step, y1: y0, y2: y0 + 8, "class": "axis"});
        if (i < 15) {
            add(svg, "text", {x: x(i), y: 810, "class": "t18 mid"}, 2016 + i);
        }
    }
}

function drawMonthly() {
    var svg = document.getElementById("monthly");
    var x0 = 42, x1 = 1168, y0 = 535, y1 = 56, step = (x1 - x0) / 11;
    var months = ["Jan", "Fév", "Mar", "Avr", "Mai", "Jui", "Jui", "Aoû", "Sep", "Oct", "Nov", "Déc"];
    var series = [
        {color: "#06c755", id: "g2020", top: "#e4fbe6", a: 0.7, v: [46.6, 51.8, 62, 51.8, 62.2, 59.7, 42.3, 62, 51.9, 81.3, 96.4, 76.8]},
        {color: "#00906c", id: "g2021", top: "#c4f7ee", a: 0.65, v: [33, 45.8, 49.8, 36.7, 54.4, 67.6, 57.1, 49.6, 62.7, 66.5, 79.9, 63.9]}
    ];
    var y = function (v) { return y0 - v * (y0 - y1) / 100; };
    var i;
    for (i = 0; i <= 5; i++) {
        add(svg, "line", {x1: x0, x2: x1, y1: y(i * 20), y2: y(i * 20), "class": "grid grid--grey"});
        add(svg, "text", {x: 23, y: y(i * 20) + 5, "class": "t13 end"}, i * 20);
    }
    series.forEach(function (s) {
        var pts = s.v.map(function (v, j) { return [x0 + j * step, y(v)]; });
        var grad = add(svg, "linearGradient", {id: s.id, x1: 0, x2: 0, y1: 0, y2: 1});
        add(grad, "stop", {offset: 0, "stop-color": s.top, "stop-opacity": s.a});
        add(grad, "stop", {offset: 0.6, "stop-color": s.top, "stop-opacity": s.a * 0.6});
        add(grad, "stop", {offset: 1, "stop-color": "#f7f7f7", "stop-opacity": 0.3});
        add(svg, "polygon", {points: points([[x0, y0]].concat(pts, [[x1, y0]])), fill: "url(#" + s.id + ")"});
        add(svg, "polyline", {points: points(pts), fill: "none", stroke: s.color, "stroke-width": 4});
        pts.forEach(function (p) { add(svg, "circle", {cx: p[0], cy: p[1], r: 5, fill: s.color}); });
    });
    add(svg, "path", {d: "M" + x0 + " 39V" + y0 + "H" + x1, "class": "axis"});
    months.forEach(function (m, j) {
        add(svg, "line", {x1: x0 + j * step, x2: x0 + j * step, y1: y0, y2: y0 + 8, "class": "axis"});
        add(svg, "text", {x: x0 + j * step, y: 573, "class": "t13 mid"}, m);
    });
    add(svg, "text", {x: 11, y: 20, "class": "t12 dark"}, "tCO₂/an");
}

function drawRose(svg) {
    var cx = 211, cy = 211, inner = 80;
    var slices = [
        [288, 360, 108, "#fae04b", "#ecd034"],
        [220, 288, 128, "#00dcb4", "#00bd97"],
        [61, 144, 170, "#0078d2", "#00329b"],
        [144, 220, 146, "#00c0dc", "#009db8"],
        [1, 61, 208, "#00529b", "#000f50"]
    ];
    var at = function (r, deg) {
        var a = deg * Math.PI / 180;
        return (cx + r * Math.sin(a)).toFixed(1) + " " + (cy - r * Math.cos(a)).toFixed(1);
    };
    slices.forEach(function (s) {
        add(svg, "path", {
            d: "M" + at(inner, s[0]) + "L" + at(s[2], s[0]) + "A" + s[2] + " " + s[2] + " 0 0 1 " + at(s[2], s[1]) +
                "L" + at(inner, s[1]) + "A" + inner + " " + inner + " 0 0 0 " + at(inner, s[0]) + "Z",
            fill: s[3], stroke: s[4], "stroke-width": 3
        });
    });
    add(svg, "text", {x: 0, y: 17, "class": "rose-year"}, svg.getAttribute("data-year"));
}

drawCop21();
drawScenario();
drawMonthly();
Array.prototype.forEach.call(document.querySelectorAll(".rose"), drawRose);
```
FILE: styles.css
```
* {
    box-sizing: border-box;
}

body {
    margin: 0;
    padding-top: 36px;
    background: #fff;
    color: #10242f;
    font-family: "DejaVu Sans Mono", monospace;
    font-size: 20px;
}

h1, h2, h3, h4, p, ul {
    margin: 0;
    padding: 0;
    font-weight: normal;
}

ul {
    list-style: none;
}

a {
    color: inherit;
    text-decoration: none;
}

button, input, select {
    padding: 0;
    border: 0;
    background: none;
    color: inherit;
    font: inherit;
}

.sprite {
    position: absolute;
    width: 0;
    height: 0;
}

.icon {
    display: block;
    flex: none;
    width: 28px;
    height: 28px;
    fill: none;
    stroke: currentColor;
    stroke-width: 2;
}

/* sector colours */
.c-res { background: #00529b; color: #fff; }
.c-road { background: #009fe8; color: #fff; }
.c-ter { background: #0078d2; color: #fff; }
.c-waste { background: #3fef7f; color: #10242f; }
.c-ener { background: #00dcb4; color: #10242f; }
.c-ind { background: #fde14a; color: #10242f; }
.c-air { background: #00c0dc; color: #fff; }

.app--map {
    margin: 0 75px 0 61px;
}

.app--pilot {
    margin: 0 47px 0 33px;
}

/* top bar */
.topbar {
    display: flex;
    align-items: center;
    height: 93px;
    background: #00529b;
    color: #fff;
}

.app--pilot .topbar {
    height: 98px;
}

.logo {
    flex: 0 0 35.5%;
    padding-left: 40px;
}

.logo strong {
    display: block;
    font-size: 26px;
    line-height: 30px;
}

.app--pilot .logo strong {
    font-size: 27px;
}

.logo em {
    color: #17f28b;
    font-style: normal;
}

.logo span {
    display: block;
    font-size: 15px;
    line-height: 24px;
}

.nav {
    display: flex;
    gap: 92px;
    font-weight: bold;
}

.app--pilot .nav {
    gap: 90px;
    font-size: 21px;
}

.nav a {
    display: flex;
    align-items: center;
    gap: 12px;
}

.nav .icon {
    width: 32px;
}

.nav a:first-child .icon {
    width: 27px;
}

.nav .active {
    color: #17f28b;
}

.account {
    display: flex;
    align-items: center;
    gap: 9px;
    margin: 0 45px 0 auto;
    color: #fff;
}

.account span {
    width: 56px;
    border-radius: 50%;
    background: #ff70bf;
    font-size: 18px;
    font-weight: bold;
    line-height: 56px;
}

.account i {
    border: 5px solid transparent;
    border-top: 7px solid #fff;
    border-bottom: 0;
}

.fc {
    display: flex;
    align-items: center;
    align-self: stretch;
    justify-content: center;
    width: 6%;
    background: #04141f;
    font-size: 27px;
}

.fc b {
    margin-right: 12px;
    color: #17d774;
    font-weight: normal;
}

/* filters */
.filters {
    display: flex;
    align-items: center;
    gap: 22px;
    height: 86px;
    font-size: 17px;
}

.app--pilot .filters {
    height: 89px;
    font-size: 18px;
}

.source {
    display: flex;
    align-items: center;
    gap: 13px;
    width: 17.4%;
    height: 100%;
    padding-left: 44px;
    border-right: 2px solid #cdd3d8;
    color: #33434d;
    font-size: 20px;
    line-height: 24px;
}

.source small {
    display: block;
    color: #6d8490;
    font-size: 14px;
    line-height: 20px;
}

.app--pilot .source {
    font-size: 21px;
}

.app--pilot .source small {
    font-size: 15px;
}

.dot {
    width: 26px;
    height: 26px;
    border-radius: 50%;
    background: linear-gradient(#1f2358, #6a6db4 50%, #f1e4f2);
}

.source-open {
    margin: 0 42px 0 auto;
}

.source-open .icon {
    width: 20px;
    height: 14px;
}

.field {
    position: relative;
    display: flex;
    align-items: center;
    height: 56px;
    padding: 0 18px;
    border: 2px solid #d3d9de;
    border-radius: 13px;
    color: #44555f;
}

.field--s { width: 8.8%; }
.field--m { width: 13.8%; padding-left: 40px; }
.field--l { width: 11.7%; }

.field input {
    width: 100%;
    min-width: 0;
}

.field--m input {
    width: 112px;
}

.field label {
    position: absolute;
    top: -14px;
    left: 28px;
    padding: 0 7px;
    line-height: 24px;
}

.on {
    border-bottom: 5px solid #0078d2;
}

.on input, .on .arrow {
    padding-top: 6px;
}

.on label {
    background: #fff;
}

.off {
    border-color: #e5e9ec;
    background: #e5e9ec;
    color: #768b95;
}

.on.off {
    border-bottom-color: #0078d2;
}

.off label {
    background: none;
    color: #5d7480;
}

.arrow {
    width: 56px;
    margin-right: 1px;
    text-align: center;
    font-size: 24px;
    line-height: 20px;
}

.export {
    display: flex;
    align-items: center;
    gap: 11px;
    margin: 0 43px 0 auto;
    color: #33434d;
}

/* map */
.map {
    position: relative;
    overflow: hidden;
    aspect-ratio: 2589 / 1222;
}

.map-canvas {
    display: block;
    width: 100%;
    height: 100%;
}

.map-canvas polygon, .lines polyline {
    stroke: #eae4ee;
    stroke-width: 3;
    stroke-linejoin: round;
    vector-effect: non-scaling-stroke;
}

.lines polyline {
    fill: none;
}

.lines .thick {
    stroke-width: 4;
}

.map-canvas .selected {
    stroke: #fff;
    stroke-width: 5;
}

.grain {
    mix-blend-mode: soft-light;
    opacity: .45;
}

.panel {
    position: absolute;
    border-radius: 14px;
    background: #fff;
    box-shadow: 0 2px 10px rgba(20, 20, 50, .35);
}

.scale {
    top: 36px;
    left: 66px;
    width: 295px;
    height: 367px;
    padding: 29px 40px 0 43px;
}

.scale-title {
    display: flex;
    align-items: center;
    gap: 17px;
    line-height: 30px;
    white-space: nowrap;
}

.scale-title .icon {
    width: 20px;
    height: 14px;
    color: #6d8490;
}

.scale-body {
    display: flex;
    height: 259px;
    margin-top: 23px;
}

.scale-body ul, .scale-body p {
    display: flex;
    flex-direction: column;
    justify-content: space-between;
}

.scale-body ul {
    width: 46px;
    color: #6d8490;
    font-size: 15px;
    line-height: 24px;
    text-align: right;
}

.scale-body p {
    font-size: 17px;
    line-height: 24px;
}

.scale-range {
    position: relative;
    width: 24px;
    margin: 0 29px 0 14px;
    background: linear-gradient(#10143f, #3a3f86 40%, #8f88c6 65%, #eadcf0) center / 7px 236px no-repeat;
}

.scale-range input {
    position: absolute;
    top: 50%;
    left: 50%;
    width: 259px;
    height: 24px;
    margin: 0;
    transform: translate(-50%, -50%) rotate(-90deg);
    -webkit-appearance: none;
    pointer-events: none;
}

.scale-range input::-webkit-slider-thumb {
    width: 24px;
    height: 24px;
    border: 3px solid #5cccf5;
    border-radius: 50%;
    background: #fff;
    -webkit-appearance: none;
    pointer-events: auto;
}

.zoom {
    bottom: 142px;
    left: 23px;
    display: flex;
    flex-direction: column;
    width: 80px;
    height: 151px;
    color: #4c6573;
    font-size: 38px;
    font-weight: bold;
}

.zoom button {
    flex: 1;
}

.plan {
    bottom: 142px;
    left: 124px;
    width: 138px;
    height: 140px;
    padding: 10px;
    color: #44555f;
    font-size: 16px;
}

.plan svg {
    display: block;
    width: 100%;
    height: 100%;
}

.plan span {
    position: absolute;
    right: 0;
    bottom: 23px;
    left: 0;
}

.modes {
    bottom: 20px;
    left: 23px;
    display: flex;
    align-items: center;
    gap: 52px;
    width: 564px;
    height: 88px;
    padding: 0 28px 0 43px;
    color: #33434d;
    font-weight: bold;
    white-space: nowrap;
}

.modes .active {
    flex: none;
    width: 141px;
    height: 52px;
    margin-right: -24px;
    border-radius: 22px;
    background: #00c295;
    color: #fff;
}

.modes .full {
    margin-left: auto;
    color: #6d7f8a;
}

/* popup */
.popup {
    position: absolute;
    top: 27.5%;
    left: 52.6%;
    width: 228px;
    height: 366px;
    padding: 4px 27px 0;
    border-radius: 17px;
    background: #fff;
    box-shadow: 1px 2px 5px rgba(30, 30, 50, .5);
    color: #44555f;
    text-align: center;
}

.popup::after {
    content: "";
    position: absolute;
    bottom: -16px;
    left: 24px;
    border: 22px solid transparent;
    border-top: 17px solid #fff;
    border-bottom: 0;
}

.popup--back {
    top: 45.8%;
    left: 53.9%;
    height: 142px;
    padding: 30px 27px 0;
    font-size: 15px;
    text-align: right;
}

.popup--back::after {
    display: none;
}

.popup--back span {
    display: block;
    padding-bottom: 15px;
    border-bottom: 1px solid #7e8b93;
}

.popup-tools {
    display: flex;
    align-items: center;
    justify-content: flex-end;
    gap: 8px;
    margin-right: -12px;
    height: 26px;
}

.popup-tools .icon {
    width: 20px;
    height: 20px;
}

.popup-tools button:last-child .icon {
    width: 15px;
    height: 15px;
    stroke-width: 1;
}

.popup h3 {
    font-size: 20px;
    line-height: 36px;
}

.popup h4 {
    padding-bottom: 14px;
    border-bottom: 2px solid #7e8b93;
    font-size: 15px;
    line-height: 26px;
}

.popup p {
    margin: 15px 0;
    font-size: 17px;
    line-height: 28px;
}

.tree {
    overflow: hidden;
    border-radius: 20px;
}

.tree div {
    display: flex;
    flex-direction: column;
    align-items: center;
    justify-content: center;
    overflow: hidden;
    white-space: nowrap;
}

.tree--mini {
    display: flex;
    flex-wrap: wrap;
    height: 174px;
}

.tree--mini .icon {
    width: 18px;
    height: 18px;
}

.tree--mini .c-res { width: 61%; height: 88%; }
.tree--mini .c-road { width: 39%; height: 88%; }
.tree--mini .c-ter { width: 82%; height: 12%; }
.tree--mini .c-ener { width: 18%; height: 12%; }

.side {
    top: 36px;
    right: 68px;
    width: 530px;
    padding: 32px 52px 14px 44px;
    border-radius: 17px 0 0 17px;
}

.side-head {
    display: flex;
    align-items: center;
    gap: 17px;
    line-height: 30px;
    color: #6d8490;
}

.side-head h2 {
    margin-right: auto;
    color: #33434d;
    font-size: 23px;
}

.tree--main {
    margin: 42px 0 58px;
    font-size: 16px;
    line-height: 20px;
}

.tree--main .tree-row {
    display: flex;
    flex-direction: row;
    align-items: stretch;
    justify-content: flex-start;
    height: 120px;
}

.tree--main .tree-row:first-child {
    height: 322px;
}

.tree--main .c-res { width: 68.3%; padding-top: 16px; font-weight: bold; }
.tree--main .c-road { width: 31.7%; padding-top: 16px; font-weight: bold; }
.tree--main .c-waste { width: 31.3%; padding-top: 8px; }
.tree--main .c-ter { width: 26.9%; padding-top: 8px; font-weight: bold; }
.tree--main .c-ener { width: 23.5%; padding-top: 8px; }
.tree--main .tree-last { width: 18.3%; align-items: stretch; }
.tree--main .c-ind { height: 97px; }
.tree--main .c-air { flex: 1; }

.tree--main .c-waste, .tree--main .c-ener, .tree--main .c-ind {
    color: #1d5a45;
}

.tree--main .c-waste .icon, .tree--main .c-ener .icon, .tree--main .c-ind .icon {
    color: #10242f;
}

.scrollbar {
    position: absolute;
    top: 0;
    right: 0;
    bottom: 0;
    width: 9px;
    background: #b7b7b7;
}

.scrollbar i {
    display: block;
    height: 95%;
    border-radius: 4px;
    background: #0078d2;
}

.pilot .scrollbar i {
    height: 47%;
}

.info {
    position: absolute;
    right: 16px;
    bottom: 12px;
    width: 34px;
    height: 34px;
    border-radius: 4px;
    background: #4a78ad;
    box-shadow: 0 0 0 4px rgba(255, 255, 255, .4);
    color: #fff;
    font-weight: bold;
}

/* charts */
.chart {
    display: block;
    width: 100%;
    overflow: visible;
}

.chart text {
    fill: #76838c;
}

.grid { stroke: #cfdcee; stroke-width: 2; stroke-opacity: .7; }
.grid--soft { stroke-opacity: .25; }
.grid--grey { stroke: #dcdfe0; }
.axis { fill: none; stroke: #6b7280; stroke-width: 2; }
.end { text-anchor: end; }
.mid { text-anchor: middle; }
.t12 { font-size: 12px; }
.t13 { font-size: 13px; }
.t15 { font-size: 15px; }
.t17 { font-size: 17px; }
.t18 { font-size: 18px; }
.chart .dark { fill: #10242f; }

.chart .goal-label {
    fill: #7b7fd1;
    font-family: "Noto Sans", sans-serif;
    font-size: 22px;
}

.caption {
    padding: 4px 12px 0 0;
    color: #000;
    font-family: "Liberation Serif", serif;
    font-size: 62px;
    line-height: 86px;
    text-align: center;
}

.caption--last {
    line-height: 99px;
}

/* pilotage */
.pilot {
    position: relative;
    display: grid;
    grid-template-columns: 1037px 1fr;
    padding: 64px 146px 34px 111px;
    background: linear-gradient(#e8e8e8, #fff 44px);
}

.pilot h2 {
    color: #000f1a;
    font-size: 20px;
    line-height: 30px;
}

.hypotheses h2 {
    margin-bottom: 41px;
}

.row {
    display: grid;
    grid-template-columns: 78px 191px 73px 212px 120px 135px auto;
    align-items: center;
    justify-content: start;
    height: 129px;
    line-height: 26px;
    color: #000f1a;
}

.row > label:not(.since) {
    padding-right: 20px;
}

.badge {
    display: flex;
    align-items: center;
    justify-content: center;
    width: 56px;
    height: 56px;
    border-radius: 50%;
}

.badge .icon {
    width: 36px;
    height: 36px;
}

.row .min, .row .max {
    color: #768b95;
    font-size: 22px;
}

.row .max {
    padding-left: 22px;
}

.row .since {
    color: #6d8490;
    font-size: 18px;
}

.rate {
    display: flex;
    flex-direction: column;
    padding-bottom: 30px;
    line-height: 30px;
    color: #33434d;
    text-align: center;
}

.rate input {
    width: 100%;
    height: 36px;
    margin: 0;
    -webkit-appearance: none;
}

.rate input::-webkit-slider-runnable-track {
    height: 15px;
    border-radius: 7px;
    background: #cdd4da;
}

.rate input::-webkit-slider-thumb {
    width: 36px;
    height: 36px;
    margin-top: -11px;
    border-radius: 50%;
    background: #0078d2;
    -webkit-appearance: none;
}

.year {
    position: relative;
}

.year select {
    width: 70px;
    color: #33434d;
    font-size: 18px;
    -webkit-appearance: none;
}

.year .icon {
    position: absolute;
    top: 8px;
    right: 2px;
    width: 17px;
    height: 13px;
    stroke-width: 4;
    pointer-events: none;
}

.stats {
    display: grid;
    grid-template-columns: 220px 65px 240px 65px auto;
    justify-content: start;
    height: 113px;
    margin-top: 9px;
}

.stats span, .stats small {
    display: block;
    color: #44555f;
    font-size: 18px;
    line-height: 26px;
    white-space: nowrap;
}

.stats strong {
    display: block;
    margin: 11px 0 14px;
    font-size: 28px;
    font-weight: normal;
    line-height: 36px;
}

.stats small {
    color: #10242f;
    font-size: 17px;
}

.stats i {
    padding-top: 42px;
    font-size: 18px;
    font-style: normal;
    line-height: 26px;
}

.mine strong {
    color: #3fef7f;
}

.goal strong {
    color: #7b7fd1;
}

.key {
    display: flex;
    align-items: center;
    gap: 26px;
    margin-top: 51px;
    padding-left: 62px;
    line-height: 26px;
    color: #33434d;
}

.key .unit {
    width: 169px;
    padding-top: 8px;
    color: #76838c;
    font-size: 16px;
}

.key svg {
    width: 54px;
    height: 14px;
    fill: #00529b;
    stroke: #00529b;
}

.key path {
    stroke-width: 6;
}

.key p + svg {
    margin-left: 48px;
}

.key circle {
    stroke: none;
}

/* report */
.report {
    display: grid;
    grid-template-columns: 1fr 1fr;
    gap: 55px;
    padding: 0 50px 0 45px;
    color: #10161a;
    font-size: 16px;
}

.col {
    display: flex;
    flex-direction: column;
    min-width: 0;
    padding-top: 7px;
}

.col--right {
    padding-top: 21px;
}

.report h1 {
    margin-bottom: 30px;
    font-size: 25px;
    font-weight: bold;
    line-height: 30px;
}

.lead {
    line-height: 30px;
    white-space: nowrap;
}

.lead b, .card h2 b {
    color: #0b2a6f;
}

.card {
    position: relative;
    flex: 1;
    margin-top: 31px;
    padding: 59px 60px 0;
    background: #f7f7f7;
}

.col--right .card {
    margin-top: 41px;
    padding: 61px 0 12px 54px;
}

.card-export {
    position: absolute;
    top: 25px;
    right: 24px;
    color: #33434d;
}

.col--right .card-export {
    right: 14px;
}

.card-export .icon {
    width: 21px;
    height: 22px;
}

.card h2 {
    font-size: 17px;
    font-weight: bold;
    line-height: 21px;
    white-space: nowrap;
}

.card .lead {
    margin-top: 28px;
}

.pick {
    margin: 23px 0 26px;
    line-height: 30px;
}

.col--right .pick {
    margin-top: 29px;
}

.chips {
    display: flex;
    gap: 14px;
}

.col--right .chips {
    gap: 15px;
}

.chips button {
    position: relative;
    width: 79px;
    height: 51px;
    border: 2px solid #babfc3;
    border-radius: 16px;
    background: #fff;
    font-weight: bold;
}

.chips [class]::after {
    content: "";
    position: absolute;
    bottom: -9px;
    left: 27px;
    border: 10px solid transparent;
    border-top: 8px solid;
    border-top-color: inherit;
    border-bottom: 0;
}

.chips .on-green { border-color: #1fd862; background: #3fef7f; }
.chips .on-teal { border-color: #00b492; background: #00dcb4; }
.chips .on-blue { border-color: #00329b; background: #0078d2; color: #fff; }

.card .chart {
    margin-top: 30px;
}

.roses {
    display: grid;
    grid-template-columns: 1fr 1fr;
    gap: 50px;
    margin: 65px 0 70px;
}

.rose {
    display: block;
    width: 100%;
    overflow: visible;
}

.rose-year {
    font-weight: bold;
}

.modes-key {
    display: flex;
    gap: 39px;
    line-height: 26px;
}

.modes-key li {
    display: flex;
    gap: 12px;
}

.modes-key i {
    width: 26px;
    height: 26px;
    border-width: 4px;
    border-style: solid;
    border-radius: 50%;
}

.m-car { border-color: #001a5e; background: #00529b; }
.m-bus { border-color: #0040a8; background: #0078d2; }
.m-walk { border-color: #00a9c4; background: #00c0dc; }
.m-two { border-color: #00c79f; background: #00dcb4; }
.m-bike { border-color: #f0d53c; background: #fae04b; }
```
